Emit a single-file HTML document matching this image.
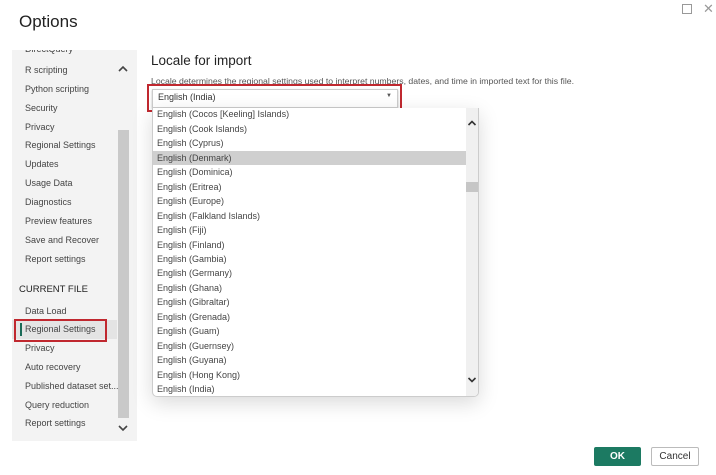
<!DOCTYPE html>
<html><head><style>
body{margin:0;width:716px;height:475px;background:#fff;font-family:"Liberation Sans",sans-serif;position:relative;overflow:hidden;color:#333}
.a{position:absolute;white-space:nowrap}
.s{font-size:9px;color:#444;left:25px}
.l{left:157px;font-size:9px;color:#444}
</style></head><body>
<div class="a" style="left:19px;top:12px;font-size:17px;color:#222">Options</div>
<div class="a" style="left:682px;top:4px;width:8px;height:8px;border:1px solid #999"></div>
<div class="a" style="left:703px;top:1px;font-size:13px;color:#999">✕</div>
<div class="a" style="left:12px;top:50px;width:125px;height:391px;background:#f3f3f3;overflow:hidden">
<div class="a" style="left:106px;top:80px;width:11px;height:288px;background:#c9c9c9"></div>
<div class="a" style="left:0;top:270px;width:105px;height:19px;background:#e4e4e4"></div>
<div class="a" style="left:8px;top:273px;width:2px;height:13px;background:#1a6b57"></div>
<div class="a" style="left:13px;top:-6px;font-size:9px;color:#444">DirectQuery</div>
</div>
<div class="a" style="left:14px;top:319px;width:89px;height:19px;border:2px solid #c0282f"></div>
<svg class="a" style="left:117px;top:65px" width="12" height="8"><path d="M2 6 L6 2 L10 6" stroke="#444" stroke-width="1.6" fill="none"/></svg>
<svg class="a" style="left:117px;top:424px" width="12" height="8"><path d="M2 2 L6 6 L10 2" stroke="#444" stroke-width="1.6" fill="none"/></svg>
<div class="a s" style="top:65px">R scripting</div>
<div class="a s" style="top:84px">Python scripting</div>
<div class="a s" style="top:103px">Security</div>
<div class="a s" style="top:122px">Privacy</div>
<div class="a s" style="top:140px">Regional Settings</div>
<div class="a s" style="top:159px">Updates</div>
<div class="a s" style="top:178px">Usage Data</div>
<div class="a s" style="top:197px">Diagnostics</div>
<div class="a s" style="top:216px">Preview features</div>
<div class="a s" style="top:235px">Save and Recover</div>
<div class="a s" style="top:254px">Report settings</div>
<div class="a" style="left:19px;top:284px;font-size:9.5px;color:#222">CURRENT FILE</div>
<div class="a s" style="top:306px">Data Load</div>
<div class="a s" style="top:324px">Regional Settings</div>
<div class="a s" style="top:343px">Privacy</div>
<div class="a s" style="top:362px">Auto recovery</div>
<div class="a s" style="top:381px">Published dataset set...</div>
<div class="a s" style="top:400px">Query reduction</div>
<div class="a s" style="top:418px">Report settings</div>

<div class="a" style="left:151px;top:53px;font-size:13.5px;color:#222">Locale for import</div>
<div class="a" style="left:151px;top:76px;font-size:8.7px;color:#555">Locale determines the regional settings used to interpret numbers, dates, and time in imported text for this file.</div>
<div class="a" style="left:147px;top:84px;width:251px;height:24px;border:2px solid #c0282f;background:#fff"></div>
<div class="a" style="left:152px;top:89px;width:244px;height:17px;border:1px solid #ccc;background:#fff;box-shadow:0 1px 2px #bbb"></div>
<div class="a" style="left:158px;top:92px;font-size:9px;color:#333">English (India)</div>
<div class="a" style="left:386px;top:93px;font-size:6px;color:#555">▼</div>
<div class="a" style="left:152px;top:108px;width:325px;height:288px;border:1px solid #ccc;border-top:none;border-radius:0 0 5px 5px;background:#fff;overflow:hidden;box-shadow:0 6px 20px rgba(0,0,0,.15)">
<div class="a" style="left:313px;top:0;width:12px;height:288px;background:#f0f0f0"></div>
<div class="a" style="left:313px;top:74px;width:12px;height:10px;background:#c6c6c6"></div>
<div class="a" style="left:0;top:43px;width:313px;height:14px;background:#cfcfcf"></div>
<svg class="a" style="left:314px;top:11px" width="10" height="8"><path d="M1.5 6 L5 2.5 L8.5 6" stroke="#333" stroke-width="1.6" fill="none"/></svg>
<svg class="a" style="left:314px;top:268px" width="10" height="8"><path d="M1.5 2 L5 5.5 L8.5 2" stroke="#333" stroke-width="1.6" fill="none"/></svg>
</div>
<div class="a l" style="top:109px">English (Cocos [Keeling] Islands)</div>
<div class="a l" style="top:124px">English (Cook Islands)</div>
<div class="a l" style="top:138px">English (Cyprus)</div>
<div class="a l" style="top:153px">English (Denmark)</div>
<div class="a l" style="top:167px">English (Dominica)</div>
<div class="a l" style="top:182px">English (Eritrea)</div>
<div class="a l" style="top:196px">English (Europe)</div>
<div class="a l" style="top:211px">English (Falkland Islands)</div>
<div class="a l" style="top:225px">English (Fiji)</div>
<div class="a l" style="top:240px">English (Finland)</div>
<div class="a l" style="top:254px">English (Gambia)</div>
<div class="a l" style="top:268px">English (Germany)</div>
<div class="a l" style="top:283px">English (Ghana)</div>
<div class="a l" style="top:297px">English (Gibraltar)</div>
<div class="a l" style="top:312px">English (Grenada)</div>
<div class="a l" style="top:326px">English (Guam)</div>
<div class="a l" style="top:341px">English (Guernsey)</div>
<div class="a l" style="top:355px">English (Guyana)</div>
<div class="a l" style="top:370px">English (Hong Kong)</div>
<div class="a l" style="top:384px">English (India)</div>

<div class="a" style="left:594px;top:447px;width:47px;height:19px;background:#1c7a62;border-radius:2px;color:#fff;font-size:10px;text-align:center;line-height:19px;font-weight:bold">OK</div>
<div class="a" style="left:651px;top:447px;width:46px;height:17px;border:1px solid #bbb;border-radius:2px;color:#333;font-size:10px;text-align:center;line-height:17px">Cancel</div>
</body></html>
